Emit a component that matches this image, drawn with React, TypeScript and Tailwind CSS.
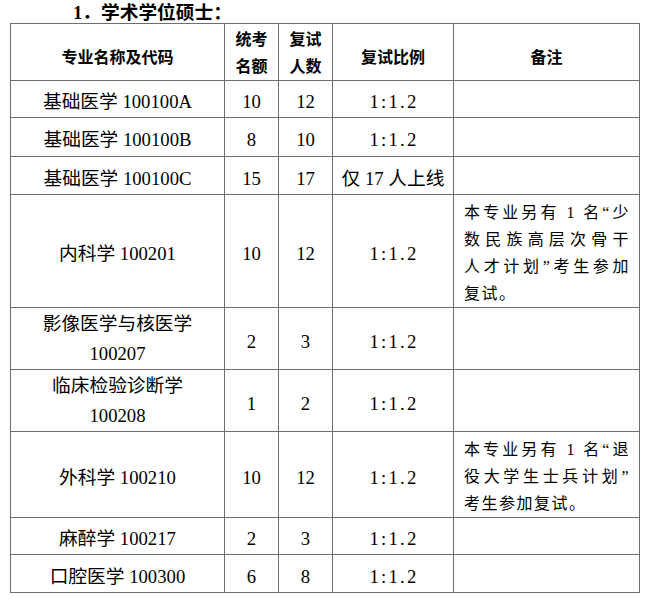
import React from "react";

type Row = {
  name: React.ReactNode;
  quota: string;
  retest: string;
  ratio: string;
  note?: string[];
  h: string;
  two?: boolean;
};

const rows: Row[] = [
  { name: "基础医学 100100A", quota: "10", retest: "12", ratio: "1:1.2", h: "h-[37px]" },
  { name: "基础医学 100100B", quota: "8", retest: "10", ratio: "1:1.2", h: "h-[39px]" },
  { name: "基础医学 100100C", quota: "15", retest: "17", ratio: "仅 17 人上线", h: "h-[38px]" },
  {
    name: "内科学 100201",
    quota: "10",
    retest: "12",
    ratio: "1:1.2",
    note: ["本专业另有 1 名“少", "数民族高层次骨干", "人才计划”考生参加", "复试。"],
    h: "h-[113px]",
  },
  {
    name: (
      <>
        <div>影像医学与核医学</div>
        <div>100207</div>
      </>
    ),
    quota: "2",
    retest: "3",
    ratio: "1:1.2",
    h: "h-[62px]",
    two: true,
  },
  {
    name: (
      <>
        <div>临床检验诊断学</div>
        <div>100208</div>
      </>
    ),
    quota: "1",
    retest: "2",
    ratio: "1:1.2",
    h: "h-[62px]",
    two: true,
  },
  {
    name: "外科学 100210",
    quota: "10",
    retest: "12",
    ratio: "1:1.2",
    note: ["本专业另有 1 名“退", "役大学生士兵计划”", "考生参加复试。"],
    h: "h-[85px]",
  },
  { name: "麻醉学 100217", quota: "2", retest: "3", ratio: "1:1.2", h: "h-[37px]" },
  { name: "口腔医学 100300", quota: "6", retest: "8", ratio: "1:1.2", h: "h-[38px]" },
];

const cell = "border border-[#6e6e6e] p-0 pt-[6px] text-center align-middle";
const th = "border border-[#6e6e6e] p-0 text-center align-middle";

export default function App() {
  return (
    <div className="w-[649px] h-[601px] bg-white text-black font-['Liberation_Serif','Noto_Sans_CJK_SC',serif]">
      <div className="pl-[73px] h-[23px] text-[18.7px] leading-[26px] font-bold">1．学术学位硕士：</div>

      <table className="ml-[10px] w-[629px] table-fixed border-collapse">
        <colgroup>
          <col className="w-[214px]" />
          <col className="w-[54px]" />
          <col className="w-[54px]" />
          <col className="w-[121px]" />
          <col className="w-[186px]" />
        </colgroup>
        <thead>
          <tr className="h-[57px] text-[16px] leading-[27px] font-bold">
            <th className={`${th} pt-[10px]`}>专业名称及代码</th>
            <th className={`${th} pt-[2px]`}>
              <div>统考</div>
              <div>名额</div>
            </th>
            <th className={`${th} pt-[2px]`}>
              <div>复试</div>
              <div>人数</div>
            </th>
            <th className={`${th} pt-[10px]`}>复试比例</th>
            <th className={`${th} pt-[10px]`}>备注</th>
          </tr>
        </thead>
        <tbody className="text-[18.7px] leading-[26px]">
          {rows.map((r, i) => (
            <tr key={i} className={r.h}>
              <td className={r.two ? "border border-[#6e6e6e] p-0 pt-[1px] text-center align-middle leading-[30px]" : cell}>
                {r.name}
              </td>
              <td className={cell}>{r.quota}</td>
              <td className={cell}>{r.retest}</td>
              <td className={cell}>
                <span className={r.ratio.startsWith("1") ? "tracking-[2.2px] pl-[2px]" : ""}>{r.ratio}</span>
              </td>
              <td className="border border-[#6e6e6e] p-0 pt-[4px] pl-[10px] pr-[9px] align-top text-[16px] leading-[27px] tracking-[1.5px]">
                {r.note?.map((line, j) => (
                  <div
                    key={j}
                    className={j < r.note!.length - 1 ? "text-justify [text-align-last:justify]" : "text-left"}
                  >
                    {line}
                  </div>
                ))}
              </td>
            </tr>
          ))}
        </tbody>
      </table>
    </div>
  );
}
